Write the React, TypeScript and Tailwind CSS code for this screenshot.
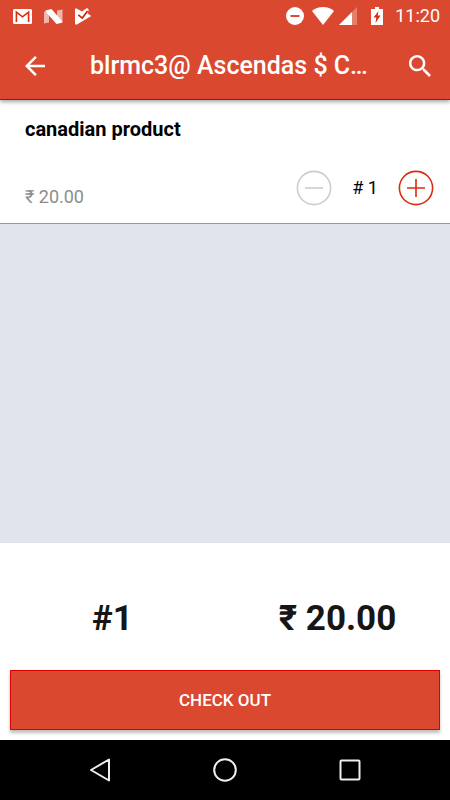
import { useState } from "react";

const PRICE = 20;

const money = (value: number) => `₹ ${value.toFixed(2)}`;

export default function App() {
  const [count, setCount] = useState(1);

  return (
    <div className="flex min-h-screen w-full flex-col bg-white font-['Roboto','Noto_Sans',sans-serif] text-black">
      <header className="relative z-10 border-b border-[#cc0000] bg-[#da482f] text-white shadow-[0_2px_4px_rgba(0,0,0,0.35)]">
        <StatusBar />
        <div className="flex h-[67px] items-center px-4">
          <button aria-label="Back" className="flex size-[38px] shrink-0 items-center justify-center">
            <svg viewBox="0 0 20 20" className="size-5 fill-white">
              <path d="M20 8.8H4.8l7-7L10 0 0 10l10 10 1.8-1.8-7-7H20z" />
            </svg>
          </button>
          <h1 className="ml-9 min-w-0 flex-1 truncate text-[25px] leading-[34px] font-medium">
            blrmc3@ Ascendas $ C…
          </h1>
          <button aria-label="Search" className="flex size-7 shrink-0 items-center justify-center">
            <svg viewBox="3 3 17.5 17.5" className="size-[22px] fill-white">
              <path d="M15.5 14h-.79l-.28-.27C15.41 12.59 16 11.11 16 9.5 16 5.91 13.09 3 9.5 3S3 5.91 3 9.5 5.91 16 9.5 16c1.61 0 3.09-.59 4.23-1.57l.27.28v.79l5 4.99L20.49 19l-4.99-5zm-6 0C7.01 14 5 11.99 5 9.5S7.01 5 9.5 5 14 7.01 14 9.5 11.99 14 9.5 14z" />
            </svg>
          </button>
        </div>
      </header>

      <main className="flex flex-1 flex-col">
        <section className="flex h-[124px] flex-col justify-between border-b border-[#c8961e] pt-[15px] pr-4 pb-[17px] pl-[25px]">
          <h2 className="text-xl leading-7 font-bold">canadian product</h2>
          <div className="flex items-end justify-between">
            <span className="text-lg leading-[18px] text-[#8c8c8c]">{money(PRICE)}</span>
            <div className="flex items-center">
              <button
                aria-label="Remove one"
                onClick={() => setCount(Math.max(1, count - 1))}
                className="text-[#cccccc]"
              >
                <svg viewBox="0 0 36 36" className="size-9 fill-none stroke-current">
                  <circle cx="18" cy="18" r="16.6" strokeWidth="1.6" />
                  <path d="M9 18h18" strokeWidth="1.6" />
                </svg>
              </button>
              <span className="w-[66px] text-center text-lg leading-6"># {count}</span>
              <button
                aria-label="Add one"
                onClick={() => setCount(count + 1)}
                className="text-[#da2c10]"
              >
                <svg viewBox="0 0 36 36" className="size-9 fill-none stroke-current">
                  <circle cx="18" cy="18" r="16.6" strokeWidth="1.6" />
                  <path d="M9 18h18M18 9v18" strokeWidth="1.6" />
                </svg>
              </button>
            </div>
          </div>
        </section>

        <div className="flex-1 bg-[#e1e4ed]" />

        <section className="pb-[10px]">
          <div className="grid h-[127px] grid-cols-2 items-center pt-6 text-center text-[35px] leading-10 font-bold text-[#161616]">
            <span>#{count}</span>
            <span>{money(PRICE * count)}</span>
          </div>
          <div className="px-[10px]">
            <button className="block h-[60px] w-full border border-[#dd0000] bg-[#da482f] text-[17px] leading-6 font-medium text-white shadow-[0_3px_3px_rgba(0,0,0,0.25)]">
              CHECK OUT
            </button>
          </div>
        </section>
      </main>

      <NavBar />
    </div>
  );
}

function StatusBar() {
  return (
    <div className="flex h-8 items-center justify-between pr-[10px] pl-[13px]">
      <div className="flex items-center gap-3">
        <svg viewBox="0 0 19 15" className="h-[15px] w-[19px]">
          <rect width="19" height="15" rx="1.5" fill="#fff" />
          <path
            d="M3.4 13V3.2l6.1 4.6 6.1-4.6V13"
            fill="none"
            stroke="#da2c10"
            strokeWidth="1.6"
          />
        </svg>
        <svg viewBox="0 0 19 15" className="h-[15px] w-[19px] fill-white">
          <path d="M0 2.5 5 4v9.5L0 14.6zM13 1.5 18.5 .4v12.6L13 10z" opacity=".6" />
          <path d="M1.5 1.5 7.5 0 18.5 12.8 18 13.8 12.5 15 1.5 2.5z" />
        </svg>
        <svg viewBox="0 0 17 17" className="h-[17px] w-[17px]">
          <path
            d="M0 1 1 .2 7 3.5 12 0l1.8 1.8L12.5 5.5 16.3 8 1.5 16.8 0 16z"
            fill="#fff"
          />
          <path d="m3.3 6.8 4 3.2L12.6 3" fill="none" stroke="#d02000" strokeWidth="1.6" />
        </svg>
      </div>

      <div className="flex items-center">
        <svg viewBox="0 0 18 18" className="size-[18px]">
          <circle cx="9" cy="9" r="9" fill="#fff" />
          <path d="M4.5 9h9" stroke="#da2c10" strokeWidth="1.7" />
        </svg>
        <svg viewBox="0 0 22 18" className="ml-2 h-[18px] w-[22px] fill-white">
          <path d="M11 18 0 4C3 1.5 6.5 0 11 0s8 1.5 11 4z" />
        </svg>
        <svg viewBox="0 0 18 18" className="ml-[5px] size-[18px] fill-white">
          <path d="M13 5 18 0v18h-5z" opacity=".3" />
          <path d="M0 18 13 5v13z" />
        </svg>
        <svg viewBox="0 0 12 18" className="ml-[14px] h-[18px] w-3">
          <path d="M4 0h4v2h4v16H0V2h4z" fill="#fff" />
          <path d="M7.5 4 2.5 10.5h2.8L4.5 16l5-7.5H6.7z" fill="#da2c10" />
        </svg>
        <span className="ml-3 text-lg leading-6">11:20</span>
      </div>
    </div>
  );
}

function NavBar() {
  return (
    <nav className="flex h-[60px] items-center justify-center gap-[101px] bg-black">
      <button aria-label="Back">
        <svg viewBox="0 0 24 26" className="h-[26px] w-6 fill-none stroke-[#eeeeee]">
          <path d="M21 2.5v21L3 13z" strokeWidth="2" strokeLinejoin="round" />
        </svg>
      </button>
      <button aria-label="Home">
        <svg viewBox="0 0 24 24" className="size-6 fill-none stroke-[#eeeeee]">
          <circle cx="12" cy="12" r="10.8" strokeWidth="2" />
        </svg>
      </button>
      <button aria-label="Recent apps">
        <svg viewBox="0 0 24 24" className="size-6 fill-none stroke-[#eeeeee]">
          <rect x="2.5" y="2.5" width="19" height="19" rx="1" strokeWidth="2" />
        </svg>
      </button>
    </nav>
  );
}
